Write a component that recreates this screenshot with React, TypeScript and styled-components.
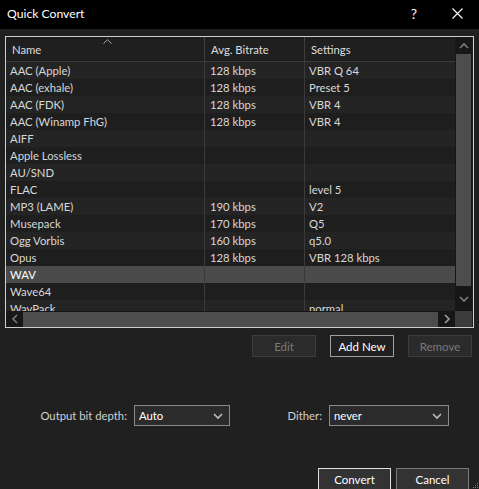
import styled, { createGlobalStyle } from "styled-components";

const GlobalStyle = createGlobalStyle`
  html, body {
    margin: 0;
    padding: 0;
    background: #202020;
  }
  body {
    font-family: Lato, "Noto Sans", sans-serif;
    font-size: 11.3px;
    color: #dcdcdc;
  }
`;

type Row = { name: string; bitrate: string; settings: string };

const rows: Row[] = [
  { name: "AAC (Apple)", bitrate: "128 kbps", settings: "VBR Q 64" },
  { name: "AAC (exhale)", bitrate: "128 kbps", settings: "Preset 5" },
  { name: "AAC (FDK)", bitrate: "128 kbps", settings: "VBR 4" },
  { name: "AAC (Winamp FhG)", bitrate: "128 kbps", settings: "VBR 4" },
  { name: "AIFF", bitrate: "", settings: "" },
  { name: "Apple Lossless", bitrate: "", settings: "" },
  { name: "AU/SND", bitrate: "", settings: "" },
  { name: "FLAC", bitrate: "", settings: "level 5" },
  { name: "MP3 (LAME)", bitrate: "190 kbps", settings: "V2" },
  { name: "Musepack", bitrate: "170 kbps", settings: "Q5" },
  { name: "Ogg Vorbis", bitrate: "160 kbps", settings: "q5.0" },
  { name: "Opus", bitrate: "128 kbps", settings: "VBR 128 kbps" },
  { name: "WAV", bitrate: "", settings: "" },
  { name: "Wave64", bitrate: "", settings: "" },
  { name: "WavPack", bitrate: "", settings: "normal" },
];

const Chevron = ({ dir, color = "#7a7a7a" }: { dir: "up" | "down" | "left" | "right"; color?: string }) => {
  const paths = {
    up: "M1 6 L5 2 L9 6",
    down: "M1 2 L5 6 L9 2",
    left: "M6 1 L2 5 L6 9",
    right: "M2 1 L6 5 L2 9",
  };
  const vertical = dir === "up" || dir === "down";
  return (
    <svg width={vertical ? 10 : 8} height={vertical ? 8 : 10} viewBox={vertical ? "0 0 10 8" : "0 0 8 10"}>
      <path d={paths[dir]} fill="none" stroke={color} strokeWidth="1.6" />
    </svg>
  );
};

export default function App() {
  return (
    <>
      <GlobalStyle />
      <Window>
        <TitleBar>
          <Title>Quick Convert</Title>
          <TitleButtons>
            <Help>?</Help>
            <svg width="11" height="11" viewBox="0 0 11 11">
              <path d="M0.5 0.5 L10.5 10.5 M10.5 0.5 L0.5 10.5" stroke="#ffffff" strokeWidth="1.1" />
            </svg>
          </TitleButtons>
        </TitleBar>

        <Content>
          <ListFrame>
            <ListArea>
              <HeaderRow>
                <HeaderCell $w={199}>
                  Name
                  <SortMark>
                    <svg width="9" height="5" viewBox="0 0 9 5">
                      <path d="M0.5 4.5 L4.5 0.8 L8.5 4.5" fill="none" stroke="#a8a8a8" strokeWidth="1" />
                    </svg>
                  </SortMark>
                </HeaderCell>
                <HeaderCell $w={100}>Avg. Bitrate</HeaderCell>
                <HeaderCell $w={150} $last>Settings</HeaderCell>
              </HeaderRow>
              <Rows>
                {rows.map((r, i) => (
                  <DataRow key={r.name} $odd={i % 2 === 1} $selected={r.name === "WAV"}>
                    <Cell $w={199} $pad={4}>{r.name}</Cell>
                    <Cell $w={100} $pad={5}>{r.bitrate}</Cell>
                    <Cell $w={150} $pad={4} $last>{r.settings}</Cell>
                  </DataRow>
                ))}
              </Rows>
            </ListArea>

            <VScroll>
              <ArrowBox $h={17}>
                <Chevron dir="up" />
              </ArrowBox>
              <VThumb />
              <ArrowBox $h={25}>
                <Chevron dir="down" />
              </ArrowBox>
            </VScroll>

            <HScroll>
              <HArrow>
                <Chevron dir="left" />
              </HArrow>
              <HThumb />
              <HArrow>
                <Chevron dir="right" color="#a0a0a0" />
              </HArrow>
            </HScroll>
            <Corner />
          </ListFrame>

          <ActionRow>
            <Button $w={64} disabled>Edit</Button>
            <Button $w={64} $accent>Add New</Button>
            <Button $w={64} disabled>Remove</Button>
          </ActionRow>

          <OptionsRow>
            <Field>
              <Label $w={94}>Output bit depth:</Label>
              <Select $w={96}>
                <span>Auto</span>
                <Chevron dir="down" color="#bdbdbd" />
              </Select>
            </Field>
            <Field>
              <Label $w={92}>Dither:</Label>
              <Select $w={120}>
                <span>never</span>
                <Chevron dir="down" color="#bdbdbd" />
              </Select>
            </Field>
          </OptionsRow>

          <Footer>
            <Button $w={73} $accent $primary>Convert</Button>
            <Button $w={73} $cancel>Cancel</Button>
          </Footer>
        </Content>
        <Grip>
          <svg width="6" height="6" viewBox="0 0 6 6">
            <rect x="4" y="0" width="1" height="1" fill="#777" />
            <rect x="2" y="2" width="1" height="1" fill="#777" />
            <rect x="4" y="2" width="1" height="1" fill="#777" />
            <rect x="0" y="4" width="1" height="1" fill="#777" />
            <rect x="2" y="4" width="1" height="1" fill="#777" />
            <rect x="4" y="4" width="1" height="1" fill="#777" />
          </svg>
        </Grip>
      </Window>
    </>
  );
}

const Window = styled.div`
  position: relative;
  width: 479px;
  height: 489px;
  overflow: hidden;
  background: #202020;
  display: flex;
  flex-direction: column;
`;

const TitleBar = styled.div`
  height: 29px;
  flex: none;
  background: #000;
  display: flex;
  align-items: center;
  justify-content: space-between;
  padding: 0 16px 0 7px;
`;

const Title = styled.div`
  color: #fff;
  font-size: 12.2px;
  padding-bottom: 2px;
`;

const TitleButtons = styled.div`
  display: flex;
  align-items: center;
  gap: 35px;
  padding-bottom: 2px;
`;

const Help = styled.span`
  color: #fff;
  font-size: 14px;
`;

const Content = styled.div`
  display: flex;
  flex-direction: column;
  padding: 7px 6px 0 5px;
`;

const ListFrame = styled.div`
  width: 467px;
  height: 290px;
  border: 1px solid #cfcfcf;
  background: #1f1f1f;
  display: grid;
  grid-template-columns: 449px 17px;
  grid-template-rows: 274px 16px;
  overflow: hidden;
`;

const ListArea = styled.div`
  overflow: hidden;
  display: flex;
  flex-direction: column;
`;

const HeaderRow = styled.div`
  display: flex;
  height: 24px;
  flex: none;
  border-bottom: 1px solid #3a3a3a;
  background: #1f1f1f;
`;

const HeaderCell = styled.div<{ $w: number; $last?: boolean }>`
  position: relative;
  width: ${(p) => p.$w}px;
  flex: none;
  box-sizing: border-box;
  padding-left: 6px;
  display: flex;
  align-items: center;
  color: #dedede;
  border-right: ${(p) => (p.$last ? "none" : "1px solid #3e3e3e")};
`;

const SortMark = styled.span`
  position: absolute;
  top: 2px;
  left: 97px;
  display: flex;
`;

const Rows = styled.div`
  flex: 1;
  overflow: hidden;
`;

const DataRow = styled.div<{ $odd: boolean; $selected: boolean }>`
  display: flex;
  height: 17px;
  background: ${(p) => (p.$selected ? "#4b4b4b" : p.$odd ? "#1e1e1e" : "#242424")};
  color: ${(p) => (p.$selected ? "#ffffff" : "#d8d8d8")};
`;

const Cell = styled.div<{ $w: number; $pad: number; $last?: boolean }>`
  width: ${(p) => p.$w}px;
  flex: none;
  box-sizing: border-box;
  padding-left: ${(p) => p.$pad}px;
  line-height: 17px;
  white-space: nowrap;
  overflow: hidden;
  border-right: ${(p) => (p.$last ? "none" : "1px solid #3a3a3a")};
`;

const VScroll = styled.div`
  background: #171717;
  display: flex;
  flex-direction: column;
  align-items: center;
`;

const ArrowBox = styled.div<{ $h: number }>`
  height: ${(p) => p.$h}px;
  flex: none;
  display: flex;
  align-items: center;
  justify-content: center;
`;

const VThumb = styled.div`
  flex: 1;
  width: 15px;
  background: #4d4d4d;
`;

const HScroll = styled.div`
  background: #171717;
  display: flex;
  align-items: center;
`;

const HArrow = styled.div`
  width: 17px;
  height: 100%;
  flex: none;
  display: flex;
  align-items: center;
  justify-content: center;
`;

const HThumb = styled.div`
  flex: 1;
  height: 15px;
  background: #4d4d4d;
`;

const Corner = styled.div`
  background: #3c3c3c;
`;

const ActionRow = styled.div`
  display: flex;
  justify-content: flex-end;
  gap: 14px;
  margin-top: 7px;
  padding-right: 1px;
`;

const Button = styled.button<{ $w: number; $accent?: boolean; $primary?: boolean; $cancel?: boolean }>`
  width: ${(p) => p.$w}px;
  height: 22px;
  box-sizing: border-box;
  font-family: Lato, "Noto Sans", sans-serif;
  font-size: 11.5px;
  padding: 0;
  background: ${(p) => (p.$primary || p.$cancel ? "#333333" : p.$accent ? "#202020" : "#2b2b2b")};
  border: 1px solid
    ${(p) => (p.$primary ? "#e0e0e0" : p.$accent ? "#a0a0a0" : p.$cancel ? "#7a7a7a" : "#3d3d3d")};
  color: #ffffff;

  &:disabled {
    color: #7a7a7a;
  }
`;

const OptionsRow = styled.div`
  display: flex;
  align-items: center;
  margin-top: 48px;
  padding-left: 28px;
`;

const Field = styled.div`
  display: flex;
  align-items: center;
  gap: 7px;
`;

const Label = styled.span<{ $w: number }>`
  width: ${(p) => p.$w}px;
  text-align: right;
  color: #d0d0d0;
`;

const Select = styled.div<{ $w: number }>`
  width: ${(p) => p.$w}px;
  height: 21px;
  box-sizing: border-box;
  border: 1px solid #8a8a8a;
  background: #2b2b2b;
  color: #ffffff;
  display: flex;
  align-items: center;
  justify-content: space-between;
  padding: 0 6px 0 4px;
`;

const Footer = styled.div`
  display: flex;
  justify-content: flex-end;
  gap: 5px;
  margin-top: 42px;
  padding-right: 4px;
`;

const Grip = styled.div`
  position: absolute;
  right: 0;
  bottom: 0;
  display: flex;
`;
